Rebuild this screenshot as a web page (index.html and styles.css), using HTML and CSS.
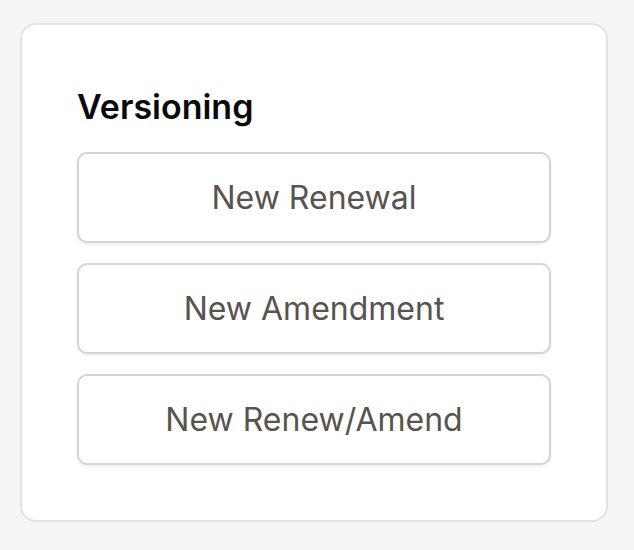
FILE: index.html
```html
<!DOCTYPE html>
<html lang="en">
<head>
    <meta charset="UTF-8">
    <meta name="viewport" content="width=device-width, initial-scale=1.0">
    <title>Versioning</title>
    <link rel="stylesheet" href="styles.css">
</head>
<body>
    <div class="panel">
        <h2>Versioning</h2>
        <div class="actions">
            <button type="button" class="btn">New Renewal</button>
            <button type="button" class="btn">New Amendment</button>
            <button type="button" class="btn">New Renew/Amend</button>
        </div>
    </div>
</body>
</html>
```

FILE: styles.css
```css
body {
    font-family: Inter, Roboto, sans-serif;
    margin: 0;
    padding: 23px 25px 0 20px;
    background-color: #f5f5f5;
}

.panel {
    width: 588px;
    box-sizing: border-box;
    border: 2px solid #e2e2e2;
    border-radius: 16px;
    background-color: #fff;
    padding: 62px 55px 55px 55px;
}

.panel h2 {
    margin: 0 0 25px 0;
    font-size: 34px;
    font-weight: 600;
    line-height: 40px;
    color: #0a0a0a;
}

.actions {
    display: flex;
    flex-direction: column;
    gap: 20px;
}

.btn {
    height: 91px;
    width: 100%;
    border: 2px solid #d4d4d4;
    border-radius: 10px;
    background-color: #fff;
    box-shadow: 0 2px 3px rgba(0, 0, 0, 0.06);
    font-family: inherit;
    font-size: 32px;
    color: #57534e;
    cursor: pointer;
}
```
